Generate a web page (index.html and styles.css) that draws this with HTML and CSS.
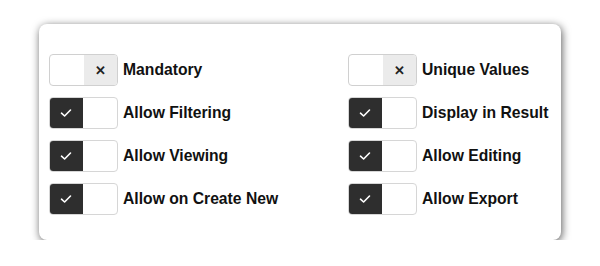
FILE: index.html
```html
<!DOCTYPE html>
<html lang="en">
  <head>
    <meta charset="UTF-8" />
    <meta name="viewport" content="width=device-width, initial-scale=1.0" />
    <title>Field Options</title>

    <link rel="stylesheet" href="styles.css">
  </head>
  <body>
    <div class="options-card">
      <div class="option-row">
        <span class="toggle off"><span class="half"></span><span class="half mark">&#x2715;</span></span>
        <span class="option-label">Mandatory</span>
      </div>
      <div class="option-row">
        <span class="toggle off"><span class="half"></span><span class="half mark">&#x2715;</span></span>
        <span class="option-label">Unique Values</span>
      </div>

      <div class="option-row">
        <span class="toggle on"><span class="half mark"><svg viewBox="0 0 12 10" width="12" height="10"><path d="M1.5 5.2 L4.6 8 L10.5 2" /></svg></span><span class="half"></span></span>
        <span class="option-label">Allow Filtering</span>
      </div>
      <div class="option-row">
        <span class="toggle on"><span class="half mark"><svg viewBox="0 0 12 10" width="12" height="10"><path d="M1.5 5.2 L4.6 8 L10.5 2" /></svg></span><span class="half"></span></span>
        <span class="option-label">Display in Result</span>
      </div>

      <div class="option-row">
        <span class="toggle on"><span class="half mark"><svg viewBox="0 0 12 10" width="12" height="10"><path d="M1.5 5.2 L4.6 8 L10.5 2" /></svg></span><span class="half"></span></span>
        <span class="option-label">Allow Viewing</span>
      </div>
      <div class="option-row">
        <span class="toggle on"><span class="half mark"><svg viewBox="0 0 12 10" width="12" height="10"><path d="M1.5 5.2 L4.6 8 L10.5 2" /></svg></span><span class="half"></span></span>
        <span class="option-label">Allow Editing</span>
      </div>

      <div class="option-row">
        <span class="toggle on"><span class="half mark"><svg viewBox="0 0 12 10" width="12" height="10"><path d="M1.5 5.2 L4.6 8 L10.5 2" /></svg></span><span class="half"></span></span>
        <span class="option-label">Allow on Create New</span>
      </div>
      <div class="option-row">
        <span class="toggle on"><span class="half mark"><svg viewBox="0 0 12 10" width="12" height="10"><path d="M1.5 5.2 L4.6 8 L10.5 2" /></svg></span><span class="half"></span></span>
        <span class="option-label">Allow Export</span>
      </div>
    </div>
  </body>
</html>
```

FILE: styles.css
```css
body {
  font-family: "Liberation Sans", Arial, sans-serif;
  margin: 0;
  background-color: #fff;
}
.options-card {
  width: 502px;
  margin: 24px 0 0 39px;
  padding: 30px 10px 25px 10px;
  background-color: #fff;
  border-radius: 8px;
  box-shadow: 1px 2px 8px rgba(0, 0, 0, 0.65);
  display: grid;
  grid-template-columns: 299px 1fr;
  row-gap: 11px;
}
.option-row {
  display: flex;
  align-items: center;
  gap: 5px;
  height: 32px;
}
.toggle {
  display: flex;
  width: 69px;
  height: 32px;
  box-sizing: border-box;
  border: 1px solid #d0d0d0;
  border-radius: 4px;
  overflow: hidden;
}
.half {
  flex: 1;
  display: flex;
  align-items: center;
  justify-content: center;
}
.toggle.off .mark {
  background-color: #ebebeb;
  color: #222;
  font-size: 13px;
  font-weight: bold;
}
.toggle.on {
  border-color: #d6d6d6;
}
.toggle.on .mark {
  background-color: #2e2e2e;
  margin: -1px 0 -1px -1px;
}
.toggle.on svg path {
  fill: none;
  stroke: #fff;
  stroke-width: 1.6;
  stroke-linecap: round;
  stroke-linejoin: round;
}
.option-label {
  font-size: 15.7px;
  font-weight: bold;
  color: #111;
}
```
